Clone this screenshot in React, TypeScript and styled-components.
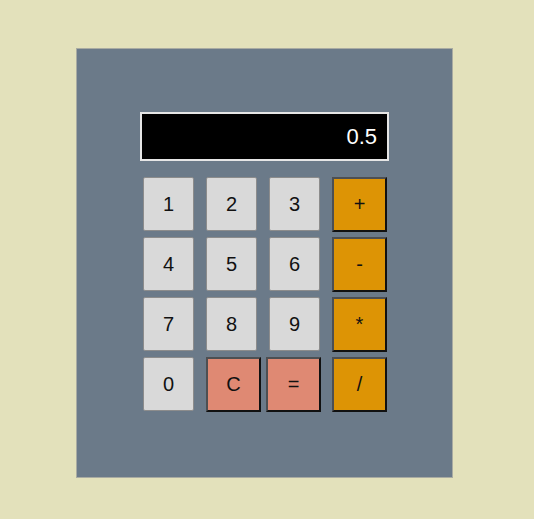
import styled, { createGlobalStyle } from "styled-components";

const GlobalStyle = createGlobalStyle`
  body {
    margin: 0;
    background: #e3e1bb;
    font-family: "Liberation Sans", Arial, sans-serif;
  }
`;

type KeyKind = "digit" | "clear" | "equals" | "op";

const rows: { label: string; kind: KeyKind }[][] = [
  [
    { label: "1", kind: "digit" },
    { label: "2", kind: "digit" },
    { label: "3", kind: "digit" },
    { label: "+", kind: "op" },
  ],
  [
    { label: "4", kind: "digit" },
    { label: "5", kind: "digit" },
    { label: "6", kind: "digit" },
    { label: "-", kind: "op" },
  ],
  [
    { label: "7", kind: "digit" },
    { label: "8", kind: "digit" },
    { label: "9", kind: "digit" },
    { label: "*", kind: "op" },
  ],
  [
    { label: "0", kind: "digit" },
    { label: "C", kind: "clear" },
    { label: "=", kind: "equals" },
    { label: "/", kind: "op" },
  ],
];

const App = () => {
  return (
    <>
      <GlobalStyle />
      <Page>
        <Calculator>
          <Display>0.5</Display>
          <Keypad>
            {rows.map((row, i) => (
              <KeyRow key={i}>
                {row.map((k) => (
                  <Key key={k.label} $kind={k.kind}>
                    {k.label}
                  </Key>
                ))}
              </KeyRow>
            ))}
          </Keypad>
        </Calculator>
      </Page>
    </>
  );
};

export default App;

const Page = styled.div`
  padding: 48px 0 0 76px;
`;

const Calculator = styled.div`
  box-sizing: border-box;
  width: 377px;
  height: 430px;
  background: #6b7a89;
  border: 1px solid #a9aba2;
  padding: 63px 0 0 63px;
`;

const Display = styled.div`
  box-sizing: border-box;
  width: 249px;
  height: 49px;
  background: #000;
  border: 2px solid #e6e6e6;
  color: #fff;
  font-size: 22px;
  line-height: 45px;
  text-align: right;
  padding-right: 10px;
`;

const Keypad = styled.div`
  display: flex;
  flex-direction: column;
  gap: 5px;
  margin: 16px 0 0 3px;
`;

const KeyRow = styled.div`
  display: flex;
  align-items: flex-start;
`;

const keyColors: Record<KeyKind, string> = {
  digit: "#d9d9d9",
  clear: "#df8973",
  equals: "#df8973",
  op: "#dd9405",
};

const keyGaps: Record<KeyKind, number> = {
  digit: 12,
  clear: 5,
  equals: 11,
  op: 0,
};

const Key = styled.button<{ $kind: KeyKind }>`
  box-sizing: border-box;
  padding: 0;
  font-family: "Liberation Sans", Arial, sans-serif;
  font-size: 20px;
  color: #111;
  background: ${({ $kind }) => keyColors[$kind]};
  margin-right: ${({ $kind }) => keyGaps[$kind]}px;
  width: ${({ $kind }) => ($kind === "digit" ? 51 : 55)}px;
  height: ${({ $kind }) => ($kind === "digit" ? 54 : 55)}px;
  border-style: solid;
  border-width: ${({ $kind }) => ($kind === "digit" ? 1 : 2)}px;
  border-color: ${({ $kind }) =>
    $kind === "digit" ? "#8c8c8c" : "#4d4f52 #111 #111 #4d4f52"};
  border-radius: ${({ $kind }) => ($kind === "digit" ? "2px" : "0")};
  cursor: pointer;
`;
